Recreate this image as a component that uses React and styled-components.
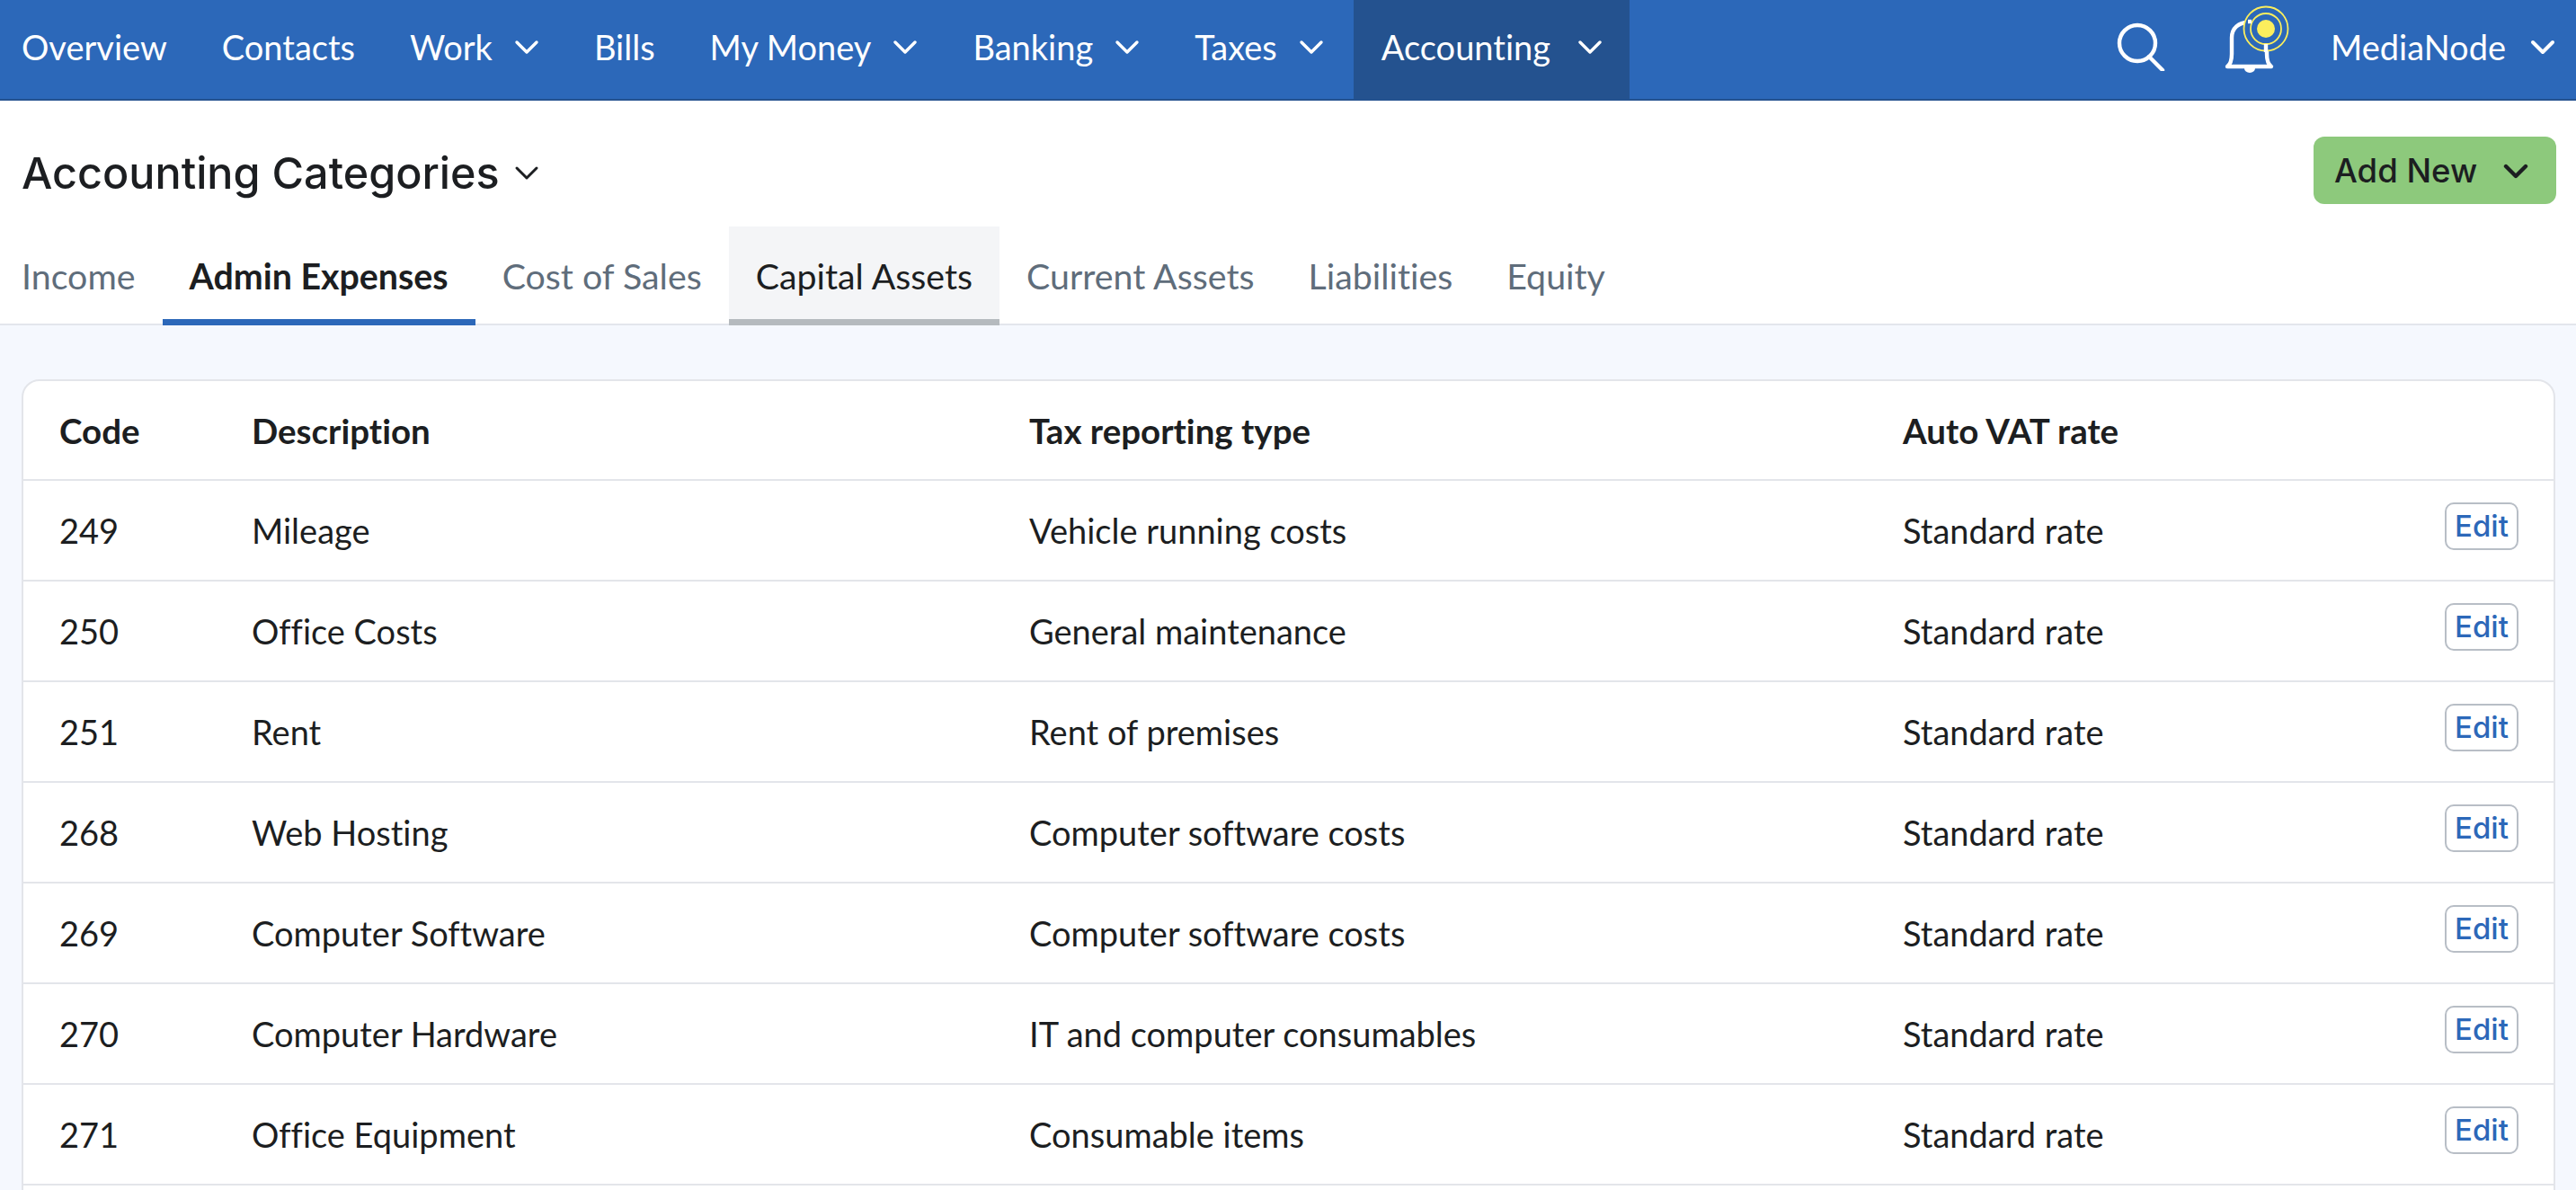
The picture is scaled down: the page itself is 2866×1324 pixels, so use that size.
import React from 'react'
import styled, { createGlobalStyle } from 'styled-components'

const GlobalStyle = createGlobalStyle`
  html, body {
    margin: 0;
    height: 100%;
    overflow: hidden;
    background: #f5f8fe;
    font-family: "Lato", "Liberation Sans", sans-serif;
    font-variant-ligatures: none;
    color: #1c1e21;
  }
  * { box-sizing: border-box; }
`

const tabs = ['Income', 'Admin Expenses', 'Cost of Sales', 'Capital Assets', 'Current Assets', 'Liabilities', 'Equity']

const navItems = [
  { label: 'Overview' },
  { label: 'Contacts' },
  { label: 'Work', menu: true },
  { label: 'Bills' },
  { label: 'My Money', menu: true },
  { label: 'Banking', menu: true },
  { label: 'Taxes', menu: true },
  { label: 'Accounting', menu: true, active: true },
]

const rows = [
  ['249', 'Mileage', 'Vehicle running costs', 'Standard rate'],
  ['250', 'Office Costs', 'General maintenance', 'Standard rate'],
  ['251', 'Rent', 'Rent of premises', 'Standard rate'],
  ['268', 'Web Hosting', 'Computer software costs', 'Standard rate'],
  ['269', 'Computer Software', 'Computer software costs', 'Standard rate'],
  ['270', 'Computer Hardware', 'IT and computer consumables', 'Standard rate'],
  ['271', 'Office Equipment', 'Consumable items', 'Standard rate'],
]

const Chevron = ({ size = 28, weight = 3.4, className }) => (
  <svg className={className} width={size} height={size} viewBox="0 0 28 28" fill="none">
    <path d="M3 9l11 11 11-11" stroke="currentColor" strokeWidth={weight} strokeLinecap="round" strokeLinejoin="round" />
  </svg>
)

const SearchIcon = () => (
  <svg width="54" height="54" viewBox="0 0 54 54" fill="none" stroke="#fff" strokeWidth="4.4" strokeLinecap="round">
    <ellipse cx="23" cy="23" rx="20" ry="20" />
    <path d="M36 38l15 15" />
  </svg>
)

const BellIcon = () => (
  <BellWrap>
    <svg width="80" height="84" viewBox="0 0 80 84" fill="none">
      <path
        d="M4 69c3-2 5-6 5-14V37C9 26 17 20 27 20h2c11 0 19 7 19 17v18c0 8 2 12 5 14z"
        stroke="#fff"
        strokeWidth="4.4"
        strokeLinejoin="round"
      />
      <path d="M23 71a6 5 0 0 0 12 0z" fill="#fff" />
      <circle cx="47" cy="27" r="24.5" fill="#2c68b9" stroke="#fcee5d" strokeWidth="1.8" />
      <circle cx="47" cy="27" r="17" stroke="#fcee5d" strokeWidth="1.8" />
      <circle cx="47" cy="27" r="10" fill="#fcee5d" />
      <path d="M31 19h-4" stroke="#fff" strokeWidth="4.4" />
      <path d="M47 44v9" stroke="#fff" strokeWidth="4.4" />
    </svg>
  </BellWrap>
)

export default function App() {
  return (
    <Page>
      <GlobalStyle />
      <TopNav>
        {navItems.map((item) => (
          <NavItem key={item.label} $active={item.active}>
            {item.label}
            {item.menu && <Chevron />}
          </NavItem>
        ))}
        <NavRight>
          <SearchIcon />
          <BellIcon />
          <Account>
            MediaNode
            <Chevron weight={4} />
          </Account>
        </NavRight>
      </TopNav>
      <Header>
        <TitleRow>
          <Title>Accounting Categories</Title>
          <TitleChevron weight={3} />
          <AddNew>
            Add New
            <Chevron weight={4.4} />
          </AddNew>
        </TitleRow>
        <Tabs>
          {tabs.map((t) => (
            <Tab key={t} $active={t === 'Admin Expenses'} $hover={t === 'Capital Assets'}>
              {t}
            </Tab>
          ))}
        </Tabs>
      </Header>
      <Main>
        <Card>
          <HeadRow>
            <span>Code</span>
            <span>Description</span>
            <span>Tax reporting type</span>
            <span>Auto VAT rate</span>
          </HeadRow>
          {rows.map((r) => (
            <Row key={r[0]}>
              <span>{r[0]}</span>
              <span>{r[1]}</span>
              <span>{r[2]}</span>
              <span>{r[3]}</span>
              <EditButton>Edit</EditButton>
            </Row>
          ))}
        </Card>
      </Main>
    </Page>
  )
}

const Page = styled.div`
  height: 1324px;
  display: flex;
  flex-direction: column;
  overflow: hidden;
`
const TopNav = styled.nav`
  height: 112px;
  flex: none;
  display: flex;
  align-items: stretch;
  background: #2c68b9;
  border-bottom: 2px solid #24528f;
  color: #fff;
`
const NavItem = styled.div`
  display: flex;
  align-items: center;
  gap: ${(p) => (p.$active ? 30 : 24)}px;
  margin-left: ${(p) => (p.$active ? 3 : 0)}px;
  padding: 0 30.5px 6px;
  font-size: 38px;
  background: ${(p) => (p.$active ? '#24528f' : 'transparent')};
  &:first-child {
    padding-left: 24px;
  }
`
const NavRight = styled.div`
  margin-left: auto;
  display: flex;
  align-items: center;
  padding: 0 23px 6px 0;
`
const BellWrap = styled.div`
  display: flex;
  margin-left: 65px;
  margin-bottom: 10px;
`
const Account = styled.div`
  display: flex;
  align-items: center;
  gap: 27px;
  margin-left: 39px;
  font-size: 38px;
`
const Header = styled.header`
  flex: none;
  background: #fff;
  border-bottom: 2px solid #e3e6ec;
  height: 250px;
  display: flex;
  flex-direction: column;
  justify-content: space-between;
`
const TitleRow = styled.div`
  display: flex;
  align-items: center;
  gap: 16px;
  padding: 40px 22px 0 24px;
  color: #1c1e21;
`
const Title = styled.h1`
  margin: 0;
  padding-top: 6px;
  font-family: "Inter", "Liberation Sans", sans-serif;
  font-size: 48.5px;
  font-weight: 500;
`
const TitleChevron = styled(Chevron)`
  margin-top: 5px;
`
const AddNew = styled.button`
  margin-left: auto;
  display: flex;
  align-items: center;
  justify-content: space-between;
  height: 75px;
  width: 270px;
  padding: 0 31px 0 23px;
  border: 0;
  border-radius: 12px;
  background: #8dc97c;
  color: #1c1e21;
  font-family: "Inter", "Liberation Sans", sans-serif;
  font-size: 36.5px;
  font-weight: 500;
`
const Tabs = styled.div`
  display: flex;
  height: 110px;
  margin-bottom: -2px;
`
const Tab = styled.div`
  display: flex;
  align-items: center;
  padding: 5px 30px 0;
  font-size: 39.35px;
  font-weight: ${(p) => (p.$active ? 700 : 400)};
  color: ${(p) => (p.$active || p.$hover ? '#1c1e21' : '#5f6d7b')};
  background: ${(p) => (p.$hover ? '#f4f5f7' : 'transparent')};
  border-bottom: 7px solid ${(p) => (p.$active ? '#2c68b9' : p.$hover ? '#b5babe' : 'transparent')};
  &:first-child {
    padding-left: 24px;
  }
`
const Main = styled.main`
  flex: 1;
  padding: 60px 23px 0 24px;
`
const Card = styled.div`
  background: #fff;
  border: 2px solid #e3e5ea;
  border-radius: 20px;
  min-height: 1000px;
`
const HeadRow = styled.div`
  display: grid;
  grid-template-columns: 214px 865px 972px 1fr;
  align-items: center;
  height: 111px;
  padding-left: 40px;
  font-size: 38.5px;
  font-weight: 700;
  border-bottom: 2px solid #e3e5ea;
`
const Row = styled.div`
  display: grid;
  grid-template-columns: 214px 865px 972px 1fr auto;
  align-items: center;
  height: 112px;
  padding: 0 39px 0 40px;
  font-size: 38px;
  border-bottom: 2px solid #e3e5ea;
`
const EditButton = styled.button`
  width: 82px;
  height: 53px;
  margin-bottom: 10px;
  padding: 0;
  background: #fff;
  border: 2px solid #b8bec6;
  border-radius: 10px;
  color: #2c68b9;
  font-family: "Inter", "Liberation Sans", sans-serif;
  font-size: 33px;
  font-weight: 500;
`
